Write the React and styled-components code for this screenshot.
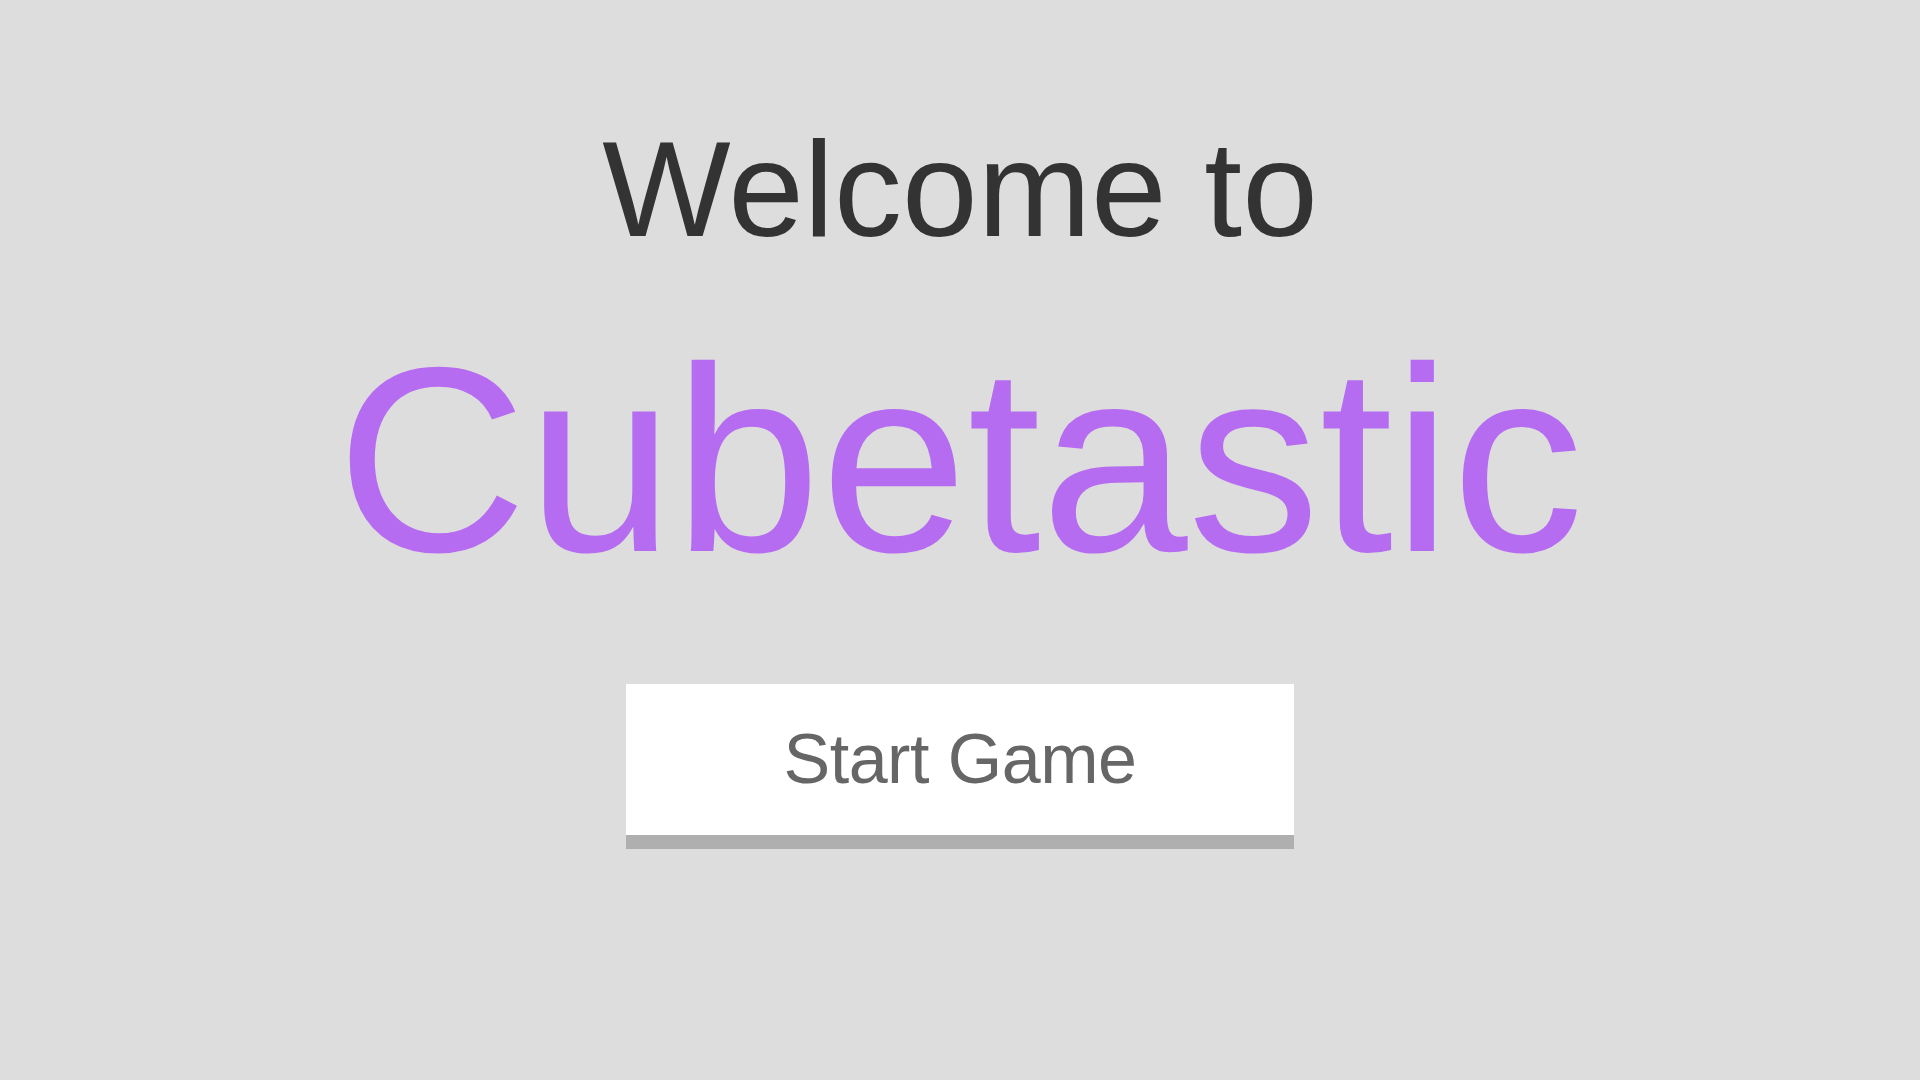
import React from 'react'
import styled, { createGlobalStyle } from 'styled-components'

const GlobalStyle = createGlobalStyle`
  html, body {
    margin: 0;
    padding: 0;
    background: #dddddd;
  }
  body {
    font-family: 'Liberation Sans', Arial, sans-serif;
  }
`

const Screen = styled.div`
  width: 100%;
  min-height: 100vh;
  display: flex;
  flex-direction: column;
  align-items: center;
  padding-top: 111px;
  box-sizing: border-box;
`

const Greeting = styled.h2`
  margin: 0;
  font-size: 136px;
  font-weight: 400;
  line-height: normal;
  color: #333333;
`

const Title = styled.h1`
  margin: 41px 0 0;
  font-size: 264px;
  font-weight: 400;
  line-height: normal;
  color: #b66cf0;
`

const StartButton = styled.button`
  margin-top: 72px;
  width: 668px;
  height: 165px;
  padding: 0 0 2px;
  border: none;
  border-bottom: 14px solid #afafaf;
  background: #ffffff;
  font-family: 'Liberation Sans', Arial, sans-serif;
  font-size: 70px;
  letter-spacing: -0.5px;
  color: #666666;
  cursor: pointer;
`

export default function App() {
  return (
    <>
      <GlobalStyle />
      <Screen>
        <Greeting>Welcome to</Greeting>
        <Title>Cubetastic</Title>
        <StartButton>Start Game</StartButton>
      </Screen>
    </>
  )
}
